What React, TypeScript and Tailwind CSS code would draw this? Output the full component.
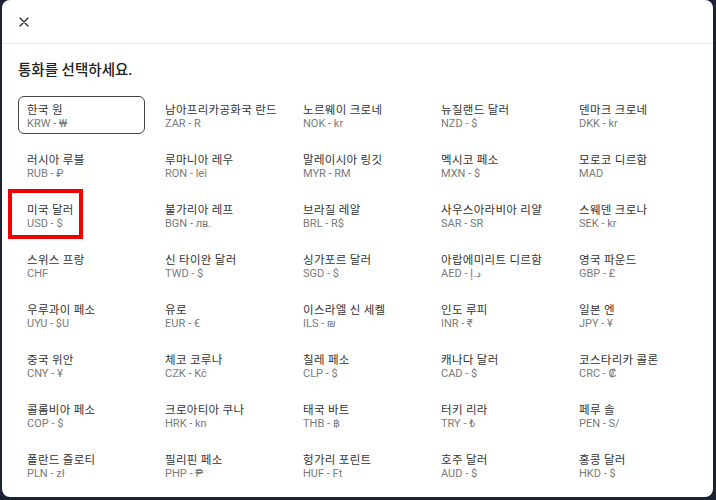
import React from 'react';

const currencies: [string, string][] = [
  ['한국 원', 'KRW - ₩'],
  ['남아프리카공화국 란드', 'ZAR - R'],
  ['노르웨이 크로네', 'NOK - kr'],
  ['뉴질랜드 달러', 'NZD - $'],
  ['덴마크 크로네', 'DKK - kr'],
  ['러시아 루블', 'RUB - ₽'],
  ['루마니아 레우', 'RON - lei'],
  ['말레이시아 링깃', 'MYR - RM'],
  ['멕시코 페소', 'MXN - $'],
  ['모로코 디르함', 'MAD'],
  ['미국 달러', 'USD - $'],
  ['불가리아 레프', 'BGN - лв.'],
  ['브라질 레알', 'BRL - R$'],
  ['사우스아라비아 리얄', 'SAR - SR'],
  ['스웨덴 크로나', 'SEK - kr'],
  ['스위스 프랑', 'CHF'],
  ['신 타이완 달러', 'TWD - $'],
  ['싱가포르 달러', 'SGD - $'],
  ['아랍에미리트 디르함', 'AED - د.إ'],
  ['영국 파운드', 'GBP - £'],
  ['우루과이 페소', 'UYU - $U'],
  ['유로', 'EUR - €'],
  ['이스라엘 신 세켈', 'ILS - ₪'],
  ['인도 루피', 'INR - ₹'],
  ['일본 엔', 'JPY - ¥'],
  ['중국 위안', 'CNY - ¥'],
  ['체코 코루나', 'CZK - Kč'],
  ['칠레 페소', 'CLP - $'],
  ['캐나다 달러', 'CAD - $'],
  ['코스타리카 콜론', 'CRC - ₡'],
  ['콜롬비아 페소', 'COP - $'],
  ['크로아티아 쿠나', 'HRK - kn'],
  ['태국 바트', 'THB - ฿'],
  ['터키 리라', 'TRY - ₺'],
  ['페루 솔', 'PEN - S/'],
  ['폴란드 즐로티', 'PLN - zł'],
  ['필리핀 페소', 'PHP - ₱'],
  ['헝가리 포린트', 'HUF - Ft'],
  ['호주 달러', 'AUD - $'],
  ['홍콩 달러', 'HKD - $'],
];

export default function App() {
  return (
    <div
      className="h-[500px] w-[716px] overflow-hidden bg-[#1c2233] pl-[2px] pr-[3px] pb-[3px]"
      style={{ fontFamily: '"Roboto", "Noto Sans CJK KR", sans-serif' }}
    >
      <div className="relative h-full rounded-[8px] bg-white">
        {/* Close bar */}
        <div className="flex h-[44px] items-center border-b border-[#e6e6e6] pl-[17px]">
          <svg width="10" height="10" viewBox="0 0 10 10" className="text-[#333]">
            <path d="M1 1L9 9M9 1L1 9" stroke="currentColor" strokeWidth="1.4" strokeLinecap="round" />
          </svg>
        </div>

        <div className="px-[16px] pt-[17px]">
          <h2 className="text-[14.5px] font-medium leading-[20px] text-[#222]">통화를 선택하세요.</h2>

          <div className="mt-[15px] grid grid-cols-5 gap-x-[11px] gap-y-[12px]">
            {currencies.map(([name, code], i) => (
              <div
                key={code + name}
                className={
                  'relative flex h-[38px] w-[127px] flex-col justify-center rounded-[6px] border px-[8px] pt-[4px] ' +
                  (i === 0 ? 'border-[#444]' : 'border-transparent')
                }
              >
                <span className="whitespace-nowrap text-[11.5px] leading-[14px] tracking-[0.3px] text-[#333]">{name}</span>
                <span className="whitespace-nowrap text-[11px] leading-[14px] text-[#7a7a7a]">{code}</span>
                {i === 10 && (
                  <div className="pointer-events-none absolute left-[-11px] top-[-8px] h-[50px] w-[75px] border-[4px] border-[#f00000]" />
                )}
              </div>
            ))}
          </div>
        </div>
      </div>
    </div>
  );
}
